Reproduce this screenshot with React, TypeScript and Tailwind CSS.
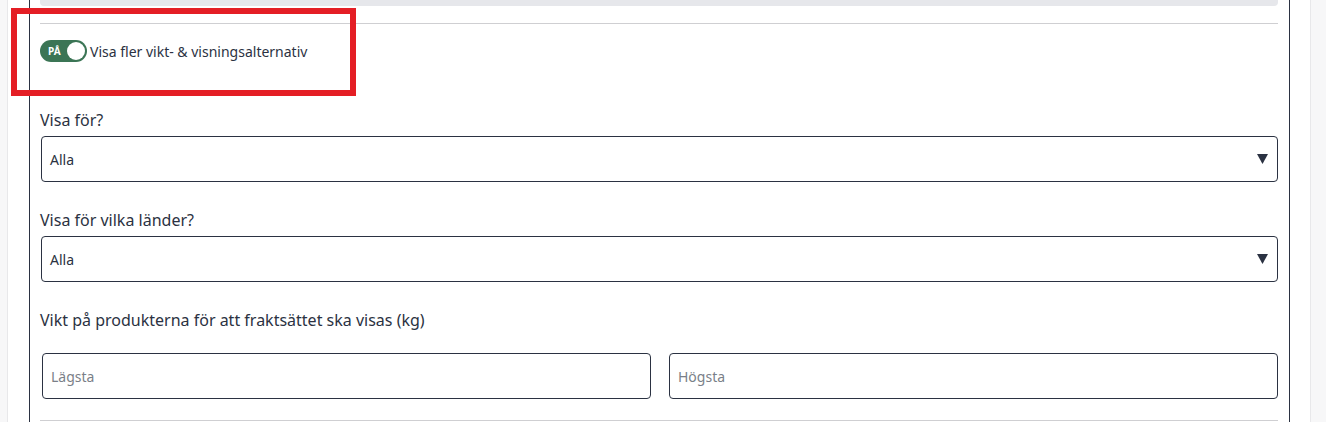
import { useState } from "react";

const FONT = { fontFamily: '"Noto Sans", "Open Sans", sans-serif' };

const SelectBox = ({ value }: { value: string }) => (
  <div className="relative flex h-[46px] items-center rounded border border-[#2b3242] px-[8px] text-[14px] text-[#2b3242]">
    <span>{value}</span>
    <svg
      className="absolute right-[9px] top-[17px]"
      width="11"
      height="10"
      viewBox="0 0 11 10"
    >
      <path d="M0 0 H11 L5.5 10 Z" fill="#2b3242" />
    </svg>
  </div>
);

const TextBox = ({ placeholder }: { placeholder: string }) => (
  <input
    placeholder={placeholder}
    className="h-[46px] w-full rounded border border-[#2b3242] px-[8px] text-[14px] text-[#2b3242] outline-none placeholder:text-[#7a7f88]"
  />
);

export default function App() {
  const [on, setOn] = useState(true);

  return (
    <div
      className="relative h-[422px] w-[1326px] overflow-hidden bg-[#f7f7f8]"
      style={FONT}
    >
      <div className="ml-[7px] mr-[15px] h-full border-x border-[#e8e8ea] bg-white pl-[21px] pr-[20px]">
        <div className="h-full border-x border-[#2b3242] pl-[10px] pr-[11px]">
          {/* top bar */}
          <div className="h-[6px] rounded-b bg-[#e6e7eb]" />
          <div className="mt-[17px] h-px bg-[#cfcfd2]" />

          {/* toggle */}
          <div className="mt-[16px] flex items-center gap-[3px]">
            <button
              onClick={() => setOn(!on)}
              className="relative flex h-[22px] w-[47px] items-center rounded-full bg-[#3b7555] pl-[8px]"
            >
              <span className="text-[10px] font-bold leading-none text-white">
                PÅ
              </span>
              <span className="absolute right-[2px] top-[2px] h-[18px] w-[18px] rounded-full bg-white" />
            </button>
            <span className="text-[14px] text-[#2b3242]">
              Visa fler vikt- &amp; visningsalternativ
            </span>
          </div>

          {/* visa för */}
          <div className="mt-[47px] text-[16px] leading-[22px] text-[#2b3242]">
            Visa för?
          </div>
          <div className="mt-[5px] pl-px">
            <SelectBox value="Alla" />
          </div>

          <div className="mt-[27px] text-[16px] leading-[22px] text-[#2b3242]">
            Visa för vilka länder?
          </div>
          <div className="mt-[5px] pl-px">
            <SelectBox value="Alla" />
          </div>

          <div className="mt-[27px] text-[16px] leading-[22px] text-[#2b3242]">
            Vikt på produkterna för att fraktsättet ska visas (kg)
          </div>
          <div className="mt-[22px] grid grid-cols-2 gap-[18px] pl-[2px]">
            <TextBox placeholder="Lägsta" />
            <TextBox placeholder="Högsta" />
          </div>
          <div className="mt-[21px] h-px bg-[#cfcfd2]" />
        </div>
      </div>

      {/* annotation */}
      <div className="pointer-events-none absolute left-[11px] top-[8px] h-[88px] w-[345px] border-[6px] border-[#e41e25]" />
    </div>
  );
}
